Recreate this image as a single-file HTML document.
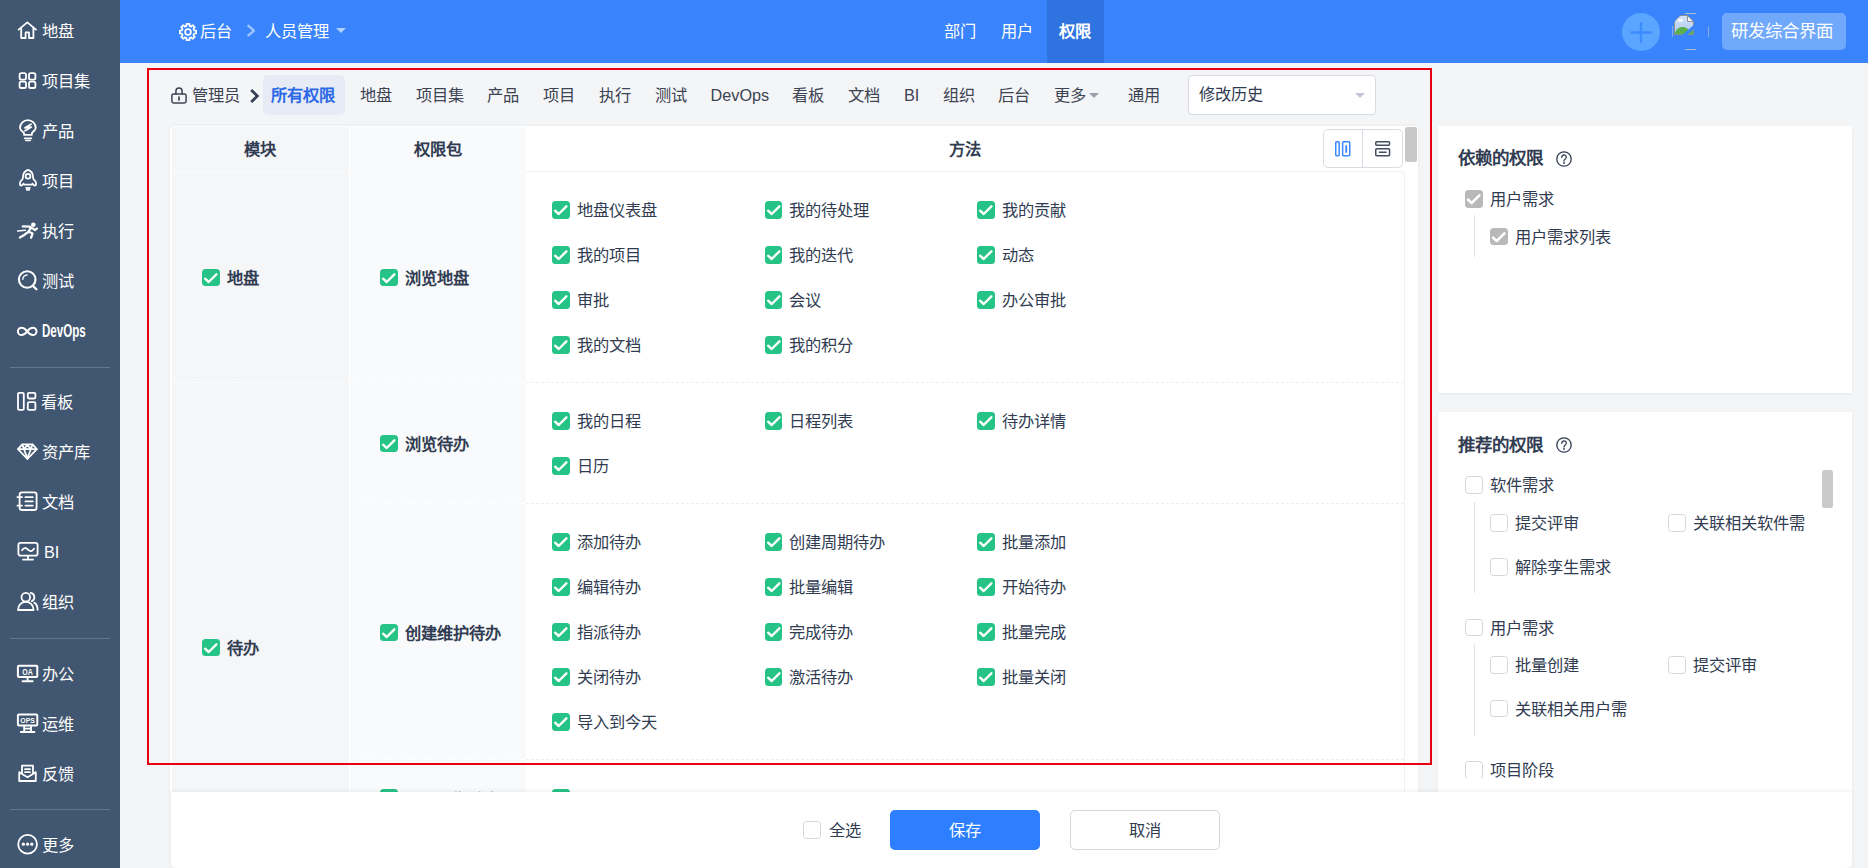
<!DOCTYPE html>
<html lang="zh-CN">
<head>
<meta charset="utf-8">
<title>权限</title>
<style>
*{box-sizing:border-box;margin:0;padding:0}
html,body{width:1868px;height:868px;overflow:hidden}
body{font-family:"Liberation Sans",sans-serif;font-size:16.25px;color:#313c52;background:#f4f5f7;position:relative}
.abs{position:absolute}
/* ---------- sidebar ---------- */
#side{position:absolute;left:0;top:0;width:120px;height:868px;background:#415670}
#side .it{position:absolute;left:0;width:120px;height:30px;line-height:30px;color:#fff;font-size:16.25px;white-space:nowrap}
#side .it svg{position:absolute;left:16px;top:3px;width:24px;height:24px;fill:none;stroke:#fff;stroke-width:1.8;stroke-linecap:round;stroke-linejoin:round}
#side .it span{position:absolute;left:42px;top:1px}
#side .hr{position:absolute;left:10px;width:100px;height:1px;background:#64768c}
/* ---------- header ---------- */
#head{position:absolute;left:120px;top:0;width:1748px;height:62.5px;background:#3984fc;color:#fff}
#head .t{position:absolute;top:0;height:62.5px;line-height:62.5px;white-space:nowrap;font-size:16.25px}
/* ---------- red frame ---------- */
#red{position:absolute;left:147px;top:68px;width:1285px;height:697px;border:2px solid #e60012;pointer-events:none;z-index:30}
/* ---------- tabs ---------- */
#tabs{position:absolute;left:0;top:75px;height:40px}
#tabs .tb{position:absolute;top:0;height:40px;line-height:40px;white-space:nowrap;color:#3c4353}
/* ---------- table ---------- */
#tbl{position:absolute;left:170px;top:126px;width:1248px;height:666px;overflow:hidden;background:#fff;border-radius:5px 3px 0 0;box-shadow:0 0 4px rgba(0,0,0,.05)}
.c1{position:absolute;left:0;width:179px;background:#f5f6f8}
.c2{position:absolute;left:179px;width:177px;background:#f9fafb}
.c3{position:absolute;left:356px;width:878px;background:#fff}
.th{font-weight:bold;text-align:center;color:#313c52}
.hl{position:absolute;height:0;border-top:1px solid #eef0f3}
.dl{position:absolute;height:0;border-top:1px dashed #eceef2}
.dl.w{border-top-color:#fff}
.ck{position:absolute;width:17.5px;height:17.5px;border-radius:3.5px;background:#26c386}
.ck svg{position:absolute;left:0;top:0;width:17.5px;height:17.5px}
.lb{position:absolute;white-space:nowrap;line-height:20px;height:20px}
.b{font-weight:bold}
/* empty checkbox */
.ek{position:absolute;width:17.5px;height:17.5px;border-radius:3.5px;background:#fff;border:1px solid #d4d6db}
.gk{position:absolute;width:17.5px;height:17.5px;border-radius:3.5px;background:#b9b9b9}
.gk svg{position:absolute;left:0;top:0;width:17.5px;height:17.5px}
/* panels */
.pn{position:absolute;background:#fff;box-shadow:0 1px 3px rgba(0,0,0,.06)}
.pt{position:absolute;font-weight:bold;font-size:17.5px;line-height:24px;white-space:nowrap;color:#313c52}
.vl{position:absolute;width:0;border-left:1px solid #dfe2e7}
</style>
</head>
<body>
<div id="side">
<div class="it" style="top:15px"><svg viewBox="0 0 24 24"><path d="M2.6 11.6 11.3 4.4 20 11.6"/><path d="M5.2 10.2V20h4.4v-5.6h3.4V20h4.4V10.2"/></svg><span>地盘</span></div>
<div class="it" style="top:65px"><svg viewBox="0 0 24 24"><rect x="3.6" y="5.2" width="6.4" height="6.4" rx="1.6"/><rect x="13" y="5.2" width="6.4" height="6.4" rx="1.6"/><rect x="3.6" y="13.6" width="6.4" height="6.4" rx="1.6"/><rect x="13" y="13.6" width="6.4" height="6.4" rx="1.6"/></svg><span>项目集</span></div>
<div class="it" style="top:115px"><svg viewBox="0 0 24 24"><path d="M8.100 16.900V15.600C8.100 13.900 4 12.700 4 9.900a7.850 7.850 0 0 1 15.700 0C19.700 12.700 15.800 13.900 15.800 15.600V16.900z"/><path d="M8.600 20.300h6.800" stroke-width="1.700"/><path d="M9.800 22.500h4.400" stroke-width="1.600"/><path d="M15 6.200 8.800 9.900 15.300 9 9 12.800" stroke-width="1.700"/></svg><span>产品</span></div>
<div class="it" style="top:165px"><svg viewBox="0 0 24 24"><path d="M12 1.800C8.700 2.900 6.900 6 6.900 9.400C6.900 10.700 6.600 11.300 5.600 12.200C4.400 13.300 3.900 14.400 3.900 15.600C3.900 16.800 4.400 17.600 5.200 17.600C6 17.600 6.600 16.900 7.400 15.800L8.400 16.600H15.600L16.600 15.800C17.400 16.900 18 17.600 18.800 17.600C19.600 17.600 20.100 16.800 20.100 15.600C20.100 14.400 19.600 13.300 18.400 12.200C17.400 11.300 17.100 10.700 17.100 9.400C17.100 6 15.300 2.900 12 1.800z"/><circle cx="12" cy="8.200" r="2.400"/><path d="M9.300 18.900h5.400l-.9 3.900h-3.600z" fill="#fff" stroke="none" opacity=".92"/></svg><span>项目</span></div>
<div class="it" style="top:215px"><svg viewBox="0 0 24 24"><circle cx="17.3" cy="6.7" r="2.3" fill="#fff" stroke="none"/><path d="M6.800 8.300 13.800 8.700 15.300 9.800 19.200 12 20.900 10.500M15 9.600 12.200 14M12.200 14 8.600 16.700 3.900 19.500M12.400 13.500 16.500 15.600 15.100 19.700" stroke-width="2.300"/><path d="M1.600 12.900 9.400 12.200" stroke-width="1.500"/></svg><span>执行</span></div>
<div class="it" style="top:265px"><svg viewBox="0 0 24 24"><circle cx="11.2" cy="11.5" r="8.300" stroke-width="2.100"/><path d="M16.700 17.600l3.700 3.700" stroke-width="2.300"/><path d="M6.800 11.300a4.500 4.500 0 0 1 4.300-4.400" stroke-width="1.500"/></svg><span>测试</span></div>
<div class="it" style="top:315px"><svg viewBox="0 0 24 24"><path d="M11.200 13.400C9 10.400 7.600 9.700 5.600 9.700a3.700 3.700 0 0 0 0 7.400C7.600 17.100 9 16.400 11.200 13.400S14.800 9.700 16.800 9.700a3.700 3.700 0 0 1 0 7.400C14.800 17.100 13.400 16.400 11.200 13.400z" stroke-width="2"/></svg><span style="font-weight:bold;font-size:19px;transform:scaleX(.61);transform-origin:0 50%;top:.500px">DevOps</span></div>
<div class="hr" style="top:367px"></div>
<div class="it" style="top:386px"><svg viewBox="0 0 24 24"><rect x="2" y="3.9" width="5.800" height="17" rx="1.200"/><rect x="11.8" y="3.900" width="7.600" height="5.600" rx="1.200"/><rect x="11.8" y="13.2" width="7.600" height="7.700" rx="1.200"/></svg><span style="left:40.500px">看板</span></div>
<div class="it" style="top:436px"><svg viewBox="0 0 24 24"><path d="M6.200 5.400h10.400l4.200 4.800-9.400 9.800-9.400-9.800z"/><path d="M2.200 10.200h18.400M8 10.200l3.400 9.200 3.400-9.200M6.400 5.600 8 10.200l3.400-4.600 3.400 4.600 1.600-4.600"/></svg><span>资产库</span></div>
<div class="it" style="top:486px"><svg viewBox="0 0 24 24"><rect x="3.600" y="3.400" width="17" height="17.600" rx="2.400"/><path d="M1.400 8.200h4.600M1.400 16.600h4.600M9.400 8.200h7.400M9.400 12.400h7.400M9.400 16.600h7.400"/></svg><span>文档</span></div>
<div class="it" style="top:536px"><svg viewBox="0 0 24 24"><rect x="2.400" y="3.900" width="19.200" height="12.800" rx="2.200"/><path d="M12 16.800v3.400M7 20.600h10M6 11.200c1.800-2.800 3.800-2.800 6-.6s4 2.200 6-.8"/></svg><span style="left:44px">BI</span></div>
<div class="it" style="top:586px"><svg viewBox="0 0 24 24"><circle cx="9.800" cy="8.200" r="4.300"/><path d="M2 21c0-5 3.400-8.200 7.800-8.200s7.800 3.200 7.800 8.200z"/><path d="M14.600 3.900a4.300 4.300 0 0 1 1.200 8.200M18.200 13.600c2.200 1.200 3.400 3.600 3.400 7.200"/></svg><span>组织</span></div>
<div class="hr" style="top:638px"></div>
<div class="it" style="top:658px"><svg viewBox="0 0 24 24"><rect x="1.900" y="4.700" width="19.400" height="11.400" rx="1" stroke-width="2"/><path d="M11.600 16.200v3.600M6.600 20.200h10" stroke-width="2"/><text x="11.600" y="13.600" font-family="Liberation Sans" font-size="8.500" font-weight="bold" fill="#fff" stroke="none" text-anchor="middle" textLength="10.500" lengthAdjust="spacingAndGlyphs">OA</text></svg><span>办公</span></div>
<div class="it" style="top:708px"><svg viewBox="0 0 24 24"><rect x="1.900" y="3.400" width="19.400" height="11.200" rx="1" stroke-width="2"/><path d="M8.200 14.800v6M15 14.800v6M4.800 21h13.600M8.200 17.600H15" stroke-width="1.900"/><text x="11.600" y="12" font-family="Liberation Sans" font-size="7.500" font-weight="bold" fill="#fff" stroke="none" text-anchor="middle" textLength="14.500" lengthAdjust="spacingAndGlyphs">OPS</text></svg><span>运维</span></div>
<div class="it" style="top:758px"><svg viewBox="0 0 24 24"><path d="M3.200 11.200v8.800h16.600v-8.800M6 12.400V4.700h11v7.700M3.200 11.200l8.300 5 8.300-5M9 8.200h5M9 11.200h5"/></svg><span>反馈</span></div>
<div class="hr" style="top:809px"></div>
<div class="it" style="top:829px"><svg viewBox="0 0 24 24"><circle cx="11.600" cy="12.200" r="9.400"/><circle cx="7.400" cy="12.200" r="1.600" fill="#fff" stroke="none"/><circle cx="11.600" cy="12.200" r="1.600" fill="#fff" stroke="none"/><circle cx="15.800" cy="12.200" r="1.600" fill="#fff" stroke="none"/></svg><span>更多</span></div>
</div>
<div id="head">
<svg class="abs" style="left:58px;top:22px;width:20px;height:20px" viewBox="0 0 20 20" fill="none" stroke="#fff" stroke-width="1.700" stroke-linejoin="round"><path d="M8.48 3.89 L8.51 1.84 L11.49 1.84 L11.52 3.89 L13.25 4.60 L14.72 3.17 L16.83 5.28 L15.40 6.75 L16.11 8.48 L18.16 8.51 L18.16 11.49 L16.11 11.52 L15.40 13.25 L16.83 14.72 L14.72 16.83 L13.25 15.40 L11.52 16.11 L11.49 18.16 L8.51 18.16 L8.48 16.11 L6.75 15.40 L5.28 16.83 L3.17 14.72 L4.60 13.25 L3.89 11.52 L1.84 11.49 L1.84 8.51 L3.89 8.48 L4.60 6.75 L3.17 5.28 L5.28 3.17 L6.75 4.60Z"/><circle cx="10" cy="10" r="2.900"/></svg>
<div class="t" style="left:80px">后台</div>
<svg class="abs" style="left:125px;top:23px;width:12px;height:16px" viewBox="0 0 12 16" fill="none" stroke="#a3c5fd" stroke-width="2.300" stroke-linecap="round" stroke-linejoin="round"><path d="M3.400 2.800 9 7.600 3.400 12.400"/></svg>
<div class="t" style="left:145px">人员管理</div>
<div class="abs" style="left:216px;top:27.500px;width:0;height:0;border:5px solid transparent;border-top:5.500px solid #b3cffd;border-bottom:0"></div>
<div class="abs" style="left:927px;top:0;width:57px;height:62.500px;background:#2f73e0"></div>
<div class="t" style="left:824px">部门</div>
<div class="t" style="left:881px">用户</div>
<div class="t b" style="left:939px">权限</div>
<!-- right tools -->
<div class="abs" style="left:1501.500px;top:13px;width:38px;height:38px;border-radius:19px;background:#5aa5ff"></div>
<svg class="abs" style="left:1501.500px;top:13px;width:38px;height:38px" viewBox="0 0 38 38" stroke="#3c8bff" stroke-width="2.300" fill="none"><path d="M19 9v21M8.500 19.500h21"/></svg>
<div class="abs" id="ava" style="left:1552px;top:13px;width:37px;height:37px">
<svg style="position:absolute;left:2.200px;top:2px;width:20px;height:20px" viewBox="0 0 20 20"><defs><clipPath id="avc"><circle cx="16" cy="16" r="18"/></clipPath><linearGradient id="avg" x1="0" y1="0" x2="0" y2="1"><stop offset="0" stop-color="#d3e3f8"/><stop offset="1" stop-color="#aec8ee"/></linearGradient></defs><g clip-path="url(#avc)"><path d="M.5.500H13.500L19.500 6.500V19.500H.5z" fill="url(#avg)" stroke="#8f9094" stroke-width="1"/><path d="M13.500.500V6.500H19.500z" fill="#f4f5f7" stroke="#8f9094" stroke-width="1" stroke-linejoin="round"/><ellipse cx="6.600" cy="5.400" rx="2.600" ry="1.300" fill="#fff" opacity=".9"/><path d="M1 19V17.500C2.500 13.800 5.500 12 8.500 12S14 13.500 15.500 16L19 14.500V19z" fill="#5ab04c"/><path d="M20.500 9.300V13.600L12.800 20.500H7.600z" fill="#3984fc"/><circle cx="16" cy="16" r="18" fill="none" stroke="#8f9094" stroke-width="1"/></g></svg>
<div style="position:absolute;left:13px;top:0;width:10.500px;height:1px;background:#d6cfc0;opacity:.75"></div>
<div style="position:absolute;left:13px;top:36px;width:10.500px;height:1px;background:#d6cfc0;opacity:.75"></div>
<div style="position:absolute;left:0;top:13px;width:1px;height:11px;background:#9fb4d8;opacity:.8"></div>
<div style="position:absolute;left:36px;top:13px;width:1px;height:11px;background:#9fb4d8;opacity:.8"></div>
</div>
<div class="abs" style="left:1601.500px;top:13px;width:124.500px;height:36.500px;border-radius:5px;background:#70a8fc"></div>
<div class="t" style="left:1611px;font-size:17.500px;top:0;line-height:62.500px;color:#fff">研发综合界面</div>
</div>
<div id="tabs">
<svg class="abs" style="left:170px;top:11px;width:18px;height:20px" viewBox="0 0 18 20" fill="none" stroke="#3c4353" stroke-width="1.500" stroke-linecap="round"><rect x="1.900" y="7.900" width="14.200" height="9.100" rx="1.700"/><path d="M5.900 7.800V5.200a3.100 3.100 0 0 1 6.200 0v2.600"/><path d="M9 11v3" stroke-width="1.700"/></svg>
<div class="tb" style="left:192px">管理员</div>
<svg class="abs" style="left:247px;top:12px;width:14px;height:18px" viewBox="0 0 14 18" fill="none" stroke="#313c52" stroke-width="2.700"><path d="M4.200 3 10.300 9 4.200 15"/></svg>
<div class="abs" style="left:263px;top:0;width:82px;height:40px;border-radius:5px;background:#e6ebf5"></div>
<div class="tb b" style="left:271px;color:#2b68e6">所有权限</div>
<div class="tb" style="left:359.500px">地盘</div>
<div class="tb" style="left:415.500px">项目集</div>
<div class="tb" style="left:487px">产品</div>
<div class="tb" style="left:543px">项目</div>
<div class="tb" style="left:598.500px">执行</div>
<div class="tb" style="left:654.500px">测试</div>
<div class="tb" style="left:710.500px">DevOps</div>
<div class="tb" style="left:792px">看板</div>
<div class="tb" style="left:847.500px">文档</div>
<div class="tb" style="left:904px">BI</div>
<div class="tb" style="left:942.500px">组织</div>
<div class="tb" style="left:998px">后台</div>
<div class="tb" style="left:1053.500px">更多</div>
<div class="abs" style="left:1089px;top:18px;width:0;height:0;border:5px solid transparent;border-top:5.500px solid #9aa0ab;border-bottom:0"></div>
<div class="tb" style="left:1128px">通用</div>
<div class="abs" style="left:1188px;top:0;width:188px;height:40px;border:1px solid #d8dbe2;border-radius:4px;background:#fff"></div>
<div class="tb" style="left:1199px;top:-1px;color:#313c52">修改历史</div>
<div class="abs" style="left:1354.500px;top:17.500px;width:0;height:0;border:5px solid transparent;border-top:5.500px solid #c3c8d3;border-bottom:0"></div>
</div>
<div id="tbl">
<div class="c1" style="top:0;height:800px"></div><div class="c2" style="top:0;height:800px"></div><div class="c3" style="top:0;height:800px"></div>
<div class="abs" style="left:0;top:0;width:2px;height:800px;background:#fff"></div><div class="abs" style="left:0;top:0;width:1234px;height:1px;background:#fff"></div><div class="abs" style="left:178.500px;top:0;width:1px;height:800px;background:#fff"></div>
<div class="lb b" style="left:1px;width:178px;text-align:center;top:13px">模块</div>
<div class="lb b" style="left:179px;width:177px;text-align:center;top:13px">权限包</div>
<div class="lb b" style="left:356px;width:878px;text-align:center;top:13px">方法</div>
<div class="hl" style="left:2px;width:354px;top:45px;border-top-color:#fcfcfd"></div><div class="hl" style="left:356px;width:878px;top:45px;border-top-color:#f1f2f5"></div>
<div class="abs" style="left:1153px;top:3px;width:80px;height:39px;border:1px solid #d9dce3;border-radius:5px;background:#fff"></div>
<div class="abs" style="left:1192px;top:4px;width:1px;height:37px;background:#d9dce3"></div>
<svg class="abs" style="left:1163px;top:13px;width:20px;height:20px" viewBox="0 0 20 20" fill="none" stroke="#3c87ff" stroke-width="1.500"><rect x="2.750" y="2.750" width="3.400" height="13.900" rx=".9"/><rect x="9.650" y="2.750" width="7.100" height="13.900" rx=".9"/><path d="M13.200 6.200v7.600" stroke-width="1.900"/></svg>
<svg class="abs" style="left:1203px;top:13px;width:20px;height:20px" viewBox="0 0 20 20" fill="none" stroke="#454d61" stroke-width="1.500"><rect x="2.750" y="2.850" width="13.800" height="3.400" rx=".9"/><rect x="2.750" y="9.750" width="13.800" height="6.900" rx=".9"/><path d="M6 13.300h7.600" stroke-width="1.500"/></svg>
<div class="abs" style="left:1234px;top:46px;width:14px;height:800px;background:#fff;border-left:1px solid #f0f1f3"></div>
<div class="abs" style="left:1235.250px;top:1.250px;width:11.600px;height:34.400px;border-radius:2.500px;background:#c8c8c8"></div>
<div class="ck" style="left:32px;top:142.75px"><svg viewBox="0 0 17.5 17.5" fill="none" stroke="#fff" stroke-width="2.400" stroke-linecap="round" stroke-linejoin="round"><path d="M3.100 9.700 6.700 13 14.400 5.300"/></svg></div>
<div class="lb b" style="left:57px;top:141.50px">地盘</div>
<div class="ck" style="left:210px;top:142.75px"><svg viewBox="0 0 17.5 17.5" fill="none" stroke="#fff" stroke-width="2.400" stroke-linecap="round" stroke-linejoin="round"><path d="M3.100 9.700 6.700 13 14.400 5.300"/></svg></div>
<div class="lb b" style="left:235px;top:141.50px">浏览地盘</div>
<div class="ck" style="left:382px;top:75.25px"><svg viewBox="0 0 17.5 17.5" fill="none" stroke="#fff" stroke-width="2.400" stroke-linecap="round" stroke-linejoin="round"><path d="M3.100 9.700 6.700 13 14.400 5.300"/></svg></div>
<div class="lb" style="left:406.6px;top:73.80px">地盘仪表盘</div>
<div class="ck" style="left:594.5px;top:75.25px"><svg viewBox="0 0 17.5 17.5" fill="none" stroke="#fff" stroke-width="2.400" stroke-linecap="round" stroke-linejoin="round"><path d="M3.100 9.700 6.700 13 14.400 5.300"/></svg></div>
<div class="lb" style="left:619.1px;top:73.80px">我的待处理</div>
<div class="ck" style="left:807px;top:75.25px"><svg viewBox="0 0 17.5 17.5" fill="none" stroke="#fff" stroke-width="2.400" stroke-linecap="round" stroke-linejoin="round"><path d="M3.100 9.700 6.700 13 14.400 5.300"/></svg></div>
<div class="lb" style="left:831.6px;top:73.80px">我的贡献</div>
<div class="ck" style="left:382px;top:120.25px"><svg viewBox="0 0 17.5 17.5" fill="none" stroke="#fff" stroke-width="2.400" stroke-linecap="round" stroke-linejoin="round"><path d="M3.100 9.700 6.700 13 14.400 5.300"/></svg></div>
<div class="lb" style="left:406.6px;top:118.80px">我的项目</div>
<div class="ck" style="left:594.5px;top:120.25px"><svg viewBox="0 0 17.5 17.5" fill="none" stroke="#fff" stroke-width="2.400" stroke-linecap="round" stroke-linejoin="round"><path d="M3.100 9.700 6.700 13 14.400 5.300"/></svg></div>
<div class="lb" style="left:619.1px;top:118.80px">我的迭代</div>
<div class="ck" style="left:807px;top:120.25px"><svg viewBox="0 0 17.5 17.5" fill="none" stroke="#fff" stroke-width="2.400" stroke-linecap="round" stroke-linejoin="round"><path d="M3.100 9.700 6.700 13 14.400 5.300"/></svg></div>
<div class="lb" style="left:831.6px;top:118.80px">动态</div>
<div class="ck" style="left:382px;top:165.25px"><svg viewBox="0 0 17.5 17.5" fill="none" stroke="#fff" stroke-width="2.400" stroke-linecap="round" stroke-linejoin="round"><path d="M3.100 9.700 6.700 13 14.400 5.300"/></svg></div>
<div class="lb" style="left:406.6px;top:163.80px">审批</div>
<div class="ck" style="left:594.5px;top:165.25px"><svg viewBox="0 0 17.5 17.5" fill="none" stroke="#fff" stroke-width="2.400" stroke-linecap="round" stroke-linejoin="round"><path d="M3.100 9.700 6.700 13 14.400 5.300"/></svg></div>
<div class="lb" style="left:619.1px;top:163.80px">会议</div>
<div class="ck" style="left:807px;top:165.25px"><svg viewBox="0 0 17.5 17.5" fill="none" stroke="#fff" stroke-width="2.400" stroke-linecap="round" stroke-linejoin="round"><path d="M3.100 9.700 6.700 13 14.400 5.300"/></svg></div>
<div class="lb" style="left:831.6px;top:163.80px">办公审批</div>
<div class="ck" style="left:382px;top:210.25px"><svg viewBox="0 0 17.5 17.5" fill="none" stroke="#fff" stroke-width="2.400" stroke-linecap="round" stroke-linejoin="round"><path d="M3.100 9.700 6.700 13 14.400 5.300"/></svg></div>
<div class="lb" style="left:406.6px;top:208.80px">我的文档</div>
<div class="ck" style="left:594.5px;top:210.25px"><svg viewBox="0 0 17.5 17.5" fill="none" stroke="#fff" stroke-width="2.400" stroke-linecap="round" stroke-linejoin="round"><path d="M3.100 9.700 6.700 13 14.400 5.300"/></svg></div>
<div class="lb" style="left:619.1px;top:208.80px">我的积分</div>
<div class="dl w" style="left:2px;width:354px;top:256px"></div><div class="dl" style="left:356px;width:878px;top:256px"></div>
<div class="ck" style="left:32px;top:512.75px"><svg viewBox="0 0 17.5 17.5" fill="none" stroke="#fff" stroke-width="2.400" stroke-linecap="round" stroke-linejoin="round"><path d="M3.100 9.700 6.700 13 14.400 5.300"/></svg></div>
<div class="lb b" style="left:57px;top:511.50px">待办</div>
<div class="ck" style="left:210px;top:308.75px"><svg viewBox="0 0 17.5 17.5" fill="none" stroke="#fff" stroke-width="2.400" stroke-linecap="round" stroke-linejoin="round"><path d="M3.100 9.700 6.700 13 14.400 5.300"/></svg></div>
<div class="lb b" style="left:235px;top:307.50px">浏览待办</div>
<div class="ck" style="left:382px;top:286.25px"><svg viewBox="0 0 17.5 17.5" fill="none" stroke="#fff" stroke-width="2.400" stroke-linecap="round" stroke-linejoin="round"><path d="M3.100 9.700 6.700 13 14.400 5.300"/></svg></div>
<div class="lb" style="left:406.6px;top:284.80px">我的日程</div>
<div class="ck" style="left:594.5px;top:286.25px"><svg viewBox="0 0 17.5 17.5" fill="none" stroke="#fff" stroke-width="2.400" stroke-linecap="round" stroke-linejoin="round"><path d="M3.100 9.700 6.700 13 14.400 5.300"/></svg></div>
<div class="lb" style="left:619.1px;top:284.80px">日程列表</div>
<div class="ck" style="left:807px;top:286.25px"><svg viewBox="0 0 17.5 17.5" fill="none" stroke="#fff" stroke-width="2.400" stroke-linecap="round" stroke-linejoin="round"><path d="M3.100 9.700 6.700 13 14.400 5.300"/></svg></div>
<div class="lb" style="left:831.6px;top:284.80px">待办详情</div>
<div class="ck" style="left:382px;top:331.25px"><svg viewBox="0 0 17.5 17.5" fill="none" stroke="#fff" stroke-width="2.400" stroke-linecap="round" stroke-linejoin="round"><path d="M3.100 9.700 6.700 13 14.400 5.300"/></svg></div>
<div class="lb" style="left:406.6px;top:329.80px">日历</div>
<div class="dl w" style="left:179px;width:177px;top:377px"></div><div class="dl" style="left:356px;width:878px;top:377px"></div>
<div class="ck" style="left:210px;top:497.75px"><svg viewBox="0 0 17.5 17.5" fill="none" stroke="#fff" stroke-width="2.400" stroke-linecap="round" stroke-linejoin="round"><path d="M3.100 9.700 6.700 13 14.400 5.300"/></svg></div>
<div class="lb b" style="left:235px;top:496.50px">创建维护待办</div>
<div class="ck" style="left:382px;top:407.25px"><svg viewBox="0 0 17.5 17.5" fill="none" stroke="#fff" stroke-width="2.400" stroke-linecap="round" stroke-linejoin="round"><path d="M3.100 9.700 6.700 13 14.400 5.300"/></svg></div>
<div class="lb" style="left:406.6px;top:405.80px">添加待办</div>
<div class="ck" style="left:594.5px;top:407.25px"><svg viewBox="0 0 17.5 17.5" fill="none" stroke="#fff" stroke-width="2.400" stroke-linecap="round" stroke-linejoin="round"><path d="M3.100 9.700 6.700 13 14.400 5.300"/></svg></div>
<div class="lb" style="left:619.1px;top:405.80px">创建周期待办</div>
<div class="ck" style="left:807px;top:407.25px"><svg viewBox="0 0 17.5 17.5" fill="none" stroke="#fff" stroke-width="2.400" stroke-linecap="round" stroke-linejoin="round"><path d="M3.100 9.700 6.700 13 14.400 5.300"/></svg></div>
<div class="lb" style="left:831.6px;top:405.80px">批量添加</div>
<div class="ck" style="left:382px;top:452.25px"><svg viewBox="0 0 17.5 17.5" fill="none" stroke="#fff" stroke-width="2.400" stroke-linecap="round" stroke-linejoin="round"><path d="M3.100 9.700 6.700 13 14.400 5.300"/></svg></div>
<div class="lb" style="left:406.6px;top:450.80px">编辑待办</div>
<div class="ck" style="left:594.5px;top:452.25px"><svg viewBox="0 0 17.5 17.5" fill="none" stroke="#fff" stroke-width="2.400" stroke-linecap="round" stroke-linejoin="round"><path d="M3.100 9.700 6.700 13 14.400 5.300"/></svg></div>
<div class="lb" style="left:619.1px;top:450.80px">批量编辑</div>
<div class="ck" style="left:807px;top:452.25px"><svg viewBox="0 0 17.5 17.5" fill="none" stroke="#fff" stroke-width="2.400" stroke-linecap="round" stroke-linejoin="round"><path d="M3.100 9.700 6.700 13 14.400 5.300"/></svg></div>
<div class="lb" style="left:831.6px;top:450.80px">开始待办</div>
<div class="ck" style="left:382px;top:497.25px"><svg viewBox="0 0 17.5 17.5" fill="none" stroke="#fff" stroke-width="2.400" stroke-linecap="round" stroke-linejoin="round"><path d="M3.100 9.700 6.700 13 14.400 5.300"/></svg></div>
<div class="lb" style="left:406.6px;top:495.80px">指派待办</div>
<div class="ck" style="left:594.5px;top:497.25px"><svg viewBox="0 0 17.5 17.5" fill="none" stroke="#fff" stroke-width="2.400" stroke-linecap="round" stroke-linejoin="round"><path d="M3.100 9.700 6.700 13 14.400 5.300"/></svg></div>
<div class="lb" style="left:619.1px;top:495.80px">完成待办</div>
<div class="ck" style="left:807px;top:497.25px"><svg viewBox="0 0 17.5 17.5" fill="none" stroke="#fff" stroke-width="2.400" stroke-linecap="round" stroke-linejoin="round"><path d="M3.100 9.700 6.700 13 14.400 5.300"/></svg></div>
<div class="lb" style="left:831.6px;top:495.80px">批量完成</div>
<div class="ck" style="left:382px;top:542.25px"><svg viewBox="0 0 17.5 17.5" fill="none" stroke="#fff" stroke-width="2.400" stroke-linecap="round" stroke-linejoin="round"><path d="M3.100 9.700 6.700 13 14.400 5.300"/></svg></div>
<div class="lb" style="left:406.6px;top:540.80px">关闭待办</div>
<div class="ck" style="left:594.5px;top:542.25px"><svg viewBox="0 0 17.5 17.5" fill="none" stroke="#fff" stroke-width="2.400" stroke-linecap="round" stroke-linejoin="round"><path d="M3.100 9.700 6.700 13 14.400 5.300"/></svg></div>
<div class="lb" style="left:619.1px;top:540.80px">激活待办</div>
<div class="ck" style="left:807px;top:542.25px"><svg viewBox="0 0 17.5 17.5" fill="none" stroke="#fff" stroke-width="2.400" stroke-linecap="round" stroke-linejoin="round"><path d="M3.100 9.700 6.700 13 14.400 5.300"/></svg></div>
<div class="lb" style="left:831.6px;top:540.80px">批量关闭</div>
<div class="ck" style="left:382px;top:587.25px"><svg viewBox="0 0 17.5 17.5" fill="none" stroke="#fff" stroke-width="2.400" stroke-linecap="round" stroke-linejoin="round"><path d="M3.100 9.700 6.700 13 14.400 5.300"/></svg></div>
<div class="lb" style="left:406.6px;top:585.80px">导入到今天</div>
<div class="dl w" style="left:179px;width:177px;top:633px"></div><div class="dl" style="left:356px;width:878px;top:633px"></div>
<div class="ck" style="left:210px;top:662.85px"><svg viewBox="0 0 17.5 17.5" fill="none" stroke="#fff" stroke-width="2.400" stroke-linecap="round" stroke-linejoin="round"><path d="M3.100 9.700 6.700 13 14.400 5.300"/></svg></div>
<div class="lb b" style="left:235px;top:663.60px">删除周期待办</div>
<div class="ck" style="left:382px;top:662.85px"><svg viewBox="0 0 17.5 17.5" fill="none" stroke="#fff" stroke-width="2.400" stroke-linecap="round" stroke-linejoin="round"><path d="M3.100 9.700 6.700 13 14.400 5.300"/></svg></div>
<div class="lb" style="left:407px;top:663.60px">删除待办</div>
</div>
<div id="p1" class="pn" style="left:1438px;top:126px;width:414px;height:267px">
<div class="pt" style="left:20px;top:19.5px">依赖的权限</div>
<svg class="abs" style="left:117.29999999999995px;top:23.5px;width:18px;height:18px" viewBox="0 0 18 18" fill="none" stroke="#313c52" stroke-width="1.300"><circle cx="9" cy="9" r="7.200"/><path d="M6.700 7.300a2.300 2.300 0 1 1 3.400 2c-.8.500-1.100.9-1.100 1.700" stroke-linecap="round"/><circle cx="9" cy="13" r=".9" fill="#313c52" stroke="none"/></svg>
<div class="gk" style="left:27px;top:64.25px"><svg viewBox="0 0 17.5 17.5" fill="none" stroke="#fff" stroke-width="2.600" stroke-linecap="round" stroke-linejoin="round"><path d="M3.100 9.700 6.700 13 14.400 5.300"/></svg></div>
<div class="lb" style="left:52px;top:63.00px">用户需求</div>
<div class="gk" style="left:52px;top:101.75px"><svg viewBox="0 0 17.5 17.5" fill="none" stroke="#fff" stroke-width="2.600" stroke-linecap="round" stroke-linejoin="round"><path d="M3.100 9.700 6.700 13 14.400 5.300"/></svg></div>
<div class="lb" style="left:77px;top:100.50px">用户需求列表</div>
<div class="vl" style="left:36px;top:89px;height:42px"></div>
</div>
<div id="p2" class="pn" style="left:1438px;top:412px;width:414px;height:380px;overflow:hidden">
<div class="pt" style="left:20px;top:20.5px">推荐的权限</div>
<svg class="abs" style="left:117.29999999999995px;top:24.19999999999999px;width:18px;height:18px" viewBox="0 0 18 18" fill="none" stroke="#313c52" stroke-width="1.300"><circle cx="9" cy="9" r="7.200"/><path d="M6.700 7.300a2.300 2.300 0 1 1 3.400 2c-.8.500-1.100.9-1.100 1.700" stroke-linecap="round"/><circle cx="9" cy="13" r=".9" fill="#313c52" stroke="none"/></svg>
<div class="abs" style="left:0;top:58px;width:414px;height:308px;overflow:hidden" id="p2s">
<div class="ek" style="left:27px;top:6.25px"></div>
<div class="lb" style="left:52px;top:5.20px">软件需求</div>
<div class="ek" style="left:52px;top:44.25px"></div>
<div class="lb" style="left:77px;top:43.00px">提交评审</div>
<div class="ek" style="left:230px;top:44.25px"></div>
<div class="lb" style="left:255px;top:43.00px">关联相关软件需</div>
<div class="ek" style="left:52px;top:88.25px"></div>
<div class="lb" style="left:77px;top:87.00px">解除孪生需求</div>
<div class="vl" style="left:36px;top:31.5px;height:91.5px"></div>
<div class="ek" style="left:27px;top:148.75px"></div>
<div class="lb" style="left:52px;top:147.50px">用户需求</div>
<div class="ek" style="left:52px;top:186.25px"></div>
<div class="lb" style="left:77px;top:185.00px">批量创建</div>
<div class="ek" style="left:230px;top:186.25px"></div>
<div class="lb" style="left:255px;top:185.00px">提交评审</div>
<div class="ek" style="left:52px;top:229.75px"></div>
<div class="lb" style="left:77px;top:228.50px">关联相关用户需</div>
<div class="vl" style="left:36px;top:174px;height:92px"></div>
<div class="ek" style="left:27px;top:291.25px"></div>
<div class="lb" style="left:52px;top:290.00px">项目阶段</div>
</div>
<div class="abs" style="left:383.5px;top:57.5px;width:11.500px;height:38.500px;border-radius:2.500px;background:#c9c9c9"></div>
</div>
<div id="foot" class="abs" style="left:171px;top:792px;width:1681px;height:76px;background:#fff;border-radius:0 0 5px 5px;box-shadow:0 -1px 4px rgba(0,0,0,.07);z-index:20">
<div class="ek" style="left:632px;top:29px"></div>
<div class="lb" style="left:657.500px;top:27.500px">全选</div>
<div class="abs" style="left:719px;top:18px;width:150px;height:39.500px;border-radius:5px;background:#2e7fff;color:#fff;text-align:center;line-height:41.500px">保存</div>
<div class="abs" style="left:899px;top:18px;width:150px;height:39.500px;border-radius:5px;background:#fff;border:1px solid #d3d6dd;color:#313c52;text-align:center;line-height:39.500px">取消</div>
</div>
<div id="red"></div>
</body>
</html>
